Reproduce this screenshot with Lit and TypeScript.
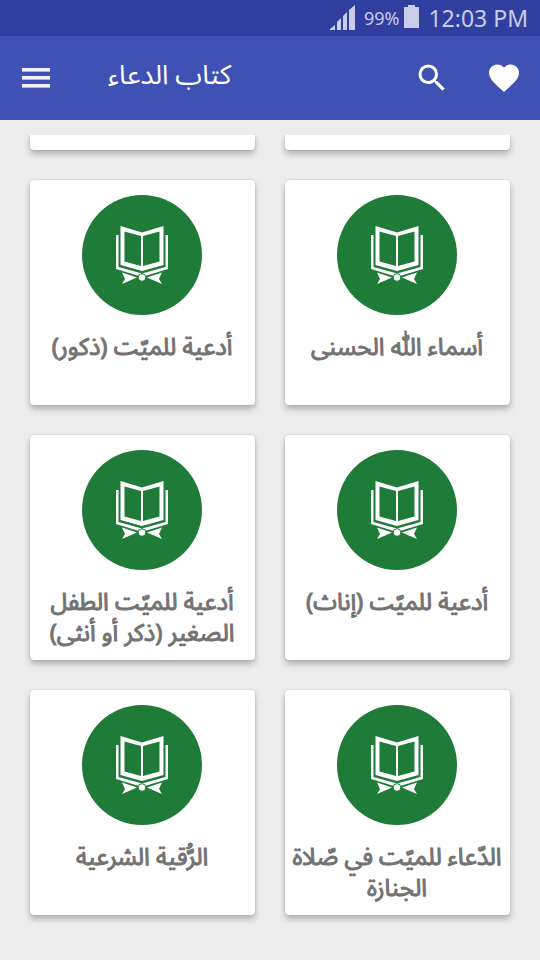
import { LitElement, html, css } from "lit";
import { customElement, property } from "lit/decorators.js";

@customElement("status-bar")
class StatusBar extends LitElement {
  static styles = css`
    :host {
      display: flex;
      align-items: center;
      justify-content: flex-end;
      height: 36px;
      padding: 0 12px;
      box-sizing: border-box;
      background: #303f9f;
      color: #c8cdea;
      font-family: "Noto Sans", sans-serif;
      white-space: nowrap;
    }
    svg {
      display: block;
      fill: currentColor;
    }
    .battery {
      margin-bottom: 4px;
    }
    .level {
      margin: 0 5px 0 8px;
      font-size: 18px;
      line-height: 24px;
    }
    .time {
      margin-left: 9px;
      font-size: 23px;
      line-height: 32px;
    }
  `;
  render() {
    return html`
      <svg width="26" height="26" viewBox="0 0 26 26" aria-hidden="true">
        <path d="M0 25v-1l5-4v5zM7 25v-8l4-4v12zM13 25V11l4-4v18zM19 25V5l6-5v25z" />
      </svg>
      <span class="level">99%</span>
      <svg class="battery" width="15" height="24" viewBox="0 0 15 24" aria-hidden="true">
        <path d="M0 3h4V1h7v2h4v21H0z" />
      </svg>
      <span class="time">12:03 PM</span>
    `;
  }
}

@customElement("app-bar")
class AppBar extends LitElement {
  static styles = css`
    :host {
      display: flex;
      align-items: center;
      height: 84px;
      padding: 0 12px;
      box-sizing: border-box;
      background: #3f51b5;
      color: #fff;
    }
    button {
      display: grid;
      place-items: center;
      width: 48px;
      height: 48px;
      padding: 0;
      border: 0;
      background: none;
      color: inherit;
    }
    svg {
      display: block;
      fill: currentColor;
    }
    h1 {
      flex: 1;
      margin: 0 0 4px 48px;
      font: 400 27px/36px "Noto Sans Arabic", "DejaVu Sans", sans-serif;
      text-align: left;
    }
    .actions {
      display: flex;
      gap: 24px;
    }
  `;
  render() {
    return html`
      <button aria-label="القائمة">
        <svg width="28" height="20" viewBox="0 0 28 20">
          <path d="M0 0h28v4H0zM0 8h28v4H0zM0 16h28v4H0z" opacity=".6" />
          <path d="M0 0h28v3H0zM0 8h28v3H0zM0 16h28v3H0z" opacity=".8" />
        </svg>
      </button>
      <h1 dir="rtl">كتاب الدعاء</h1>
      <div class="actions">
        <button aria-label="بحث">
          <svg width="36" height="36" viewBox="0 0 24 24">
            <path
              d="M15.5 14h-.79l-.28-.27A6.47 6.47 0 0 0 16 9.500 6.500 6.500 0 1 0 9.500 16c1.610 0 3.090-.59 4.230-1.570l.27.28v.79l5 4.990L20.490 19l-4.990-5zm-6 0a4.500 4.500 0 1 1 0-9 4.500 4.500 0 0 1 0 9z"
            />
          </svg>
        </button>
        <button aria-label="المفضلة">
          <svg width="36" height="36" viewBox="0 0 24 24">
            <path
              d="M12 21.350l-1.450-1.320C5.400 15.360 2 12.280 2 8.500 2 5.420 4.420 3 7.500 3c1.740 0 3.410.81 4.500 2.090C13.090 3.810 14.760 3 16.500 3 19.580 3 22 5.420 22 8.500c0 3.780-3.400 6.860-8.550 11.540z"
            />
          </svg>
        </button>
      </div>
    `;
  }
}

@customElement("dua-card")
class DuaCard extends LitElement {
  @property() label = "";

  static styles = css`
    :host {
      display: block;
      min-width: 0;
    }
    .card {
      display: flex;
      flex-direction: column;
      align-items: center;
      width: 100%;
      aspect-ratio: 1;
      padding: 15px 6px 0 5px;
      box-sizing: border-box;
      border: 0;
      border-radius: 4px;
      background: #fff;
      box-shadow: 0 4px 6px rgba(0, 0, 0, 0.26), 0 0 2px rgba(0, 0, 0, 0.16);
      color: #737373;
    }
    .disc {
      display: grid;
      place-items: center;
      flex: none;
      width: 120px;
      height: 120px;
      border-radius: 50%;
      background: #1e7b38;
    }
    .label {
      margin-top: 17px;
      font: 400 24px/31px "Noto Sans Arabic", "DejaVu Sans", sans-serif;
      -webkit-text-stroke: 1px currentColor;
      text-align: center;
    }
  `;
  render() {
    return html`
      <button class="card" dir="rtl">
        <span class="disc">
          <svg width="52" height="58" viewBox="0 0 52 58" fill="#fff" aria-hidden="true">
            <path
              fill-rule="evenodd"
              d="M4.500 0L26 6.500 47.500 0V39L26 45 4.500 39zM8.500 5.500V35.500L25 40V10zM43.500 5.500V35.500L27 40V10z"
            />
            <path d="M0 9h2.500v32L26 47.500 49.500 41V9H52V43L29 50 26 48.500 23 50 0 43z" />
            <path d="M6 46.500L21 51.500L6 58L9 53zM46 46.500L31 51.500L46 58L43 53z" />
            <circle cx="26" cy="51.500" r="3.800" stroke="#1e7b38" />
          </svg>
        </span>
        <span class="label">${this.label}</span>
      </button>
    `;
  }
}

@customElement("app-root")
class AppRoot extends LitElement {
  private duas = [
    "أسماء اللّٰه الحسنى",
    "أدعية للميّت (ذكور)",
    "أدعية للميّت (إناث)",
    "أدعية للميّت الطفل الصغير (ذكر أو أنثى)",
    "الدّعاء للميّت في صّلاة الجنازة",
    "الرُّقية الشرعية",
  ];

  static styles = css`
    :host {
      display: flex;
      flex-direction: column;
      min-height: 100vh;
      background: #ededed;
    }
    main {
      flex: 1;
      margin: 15px 0;
      padding: 0 30px;
      overflow: hidden;
    }
    .grid {
      display: grid;
      grid-template-columns: 1fr 1fr;
      gap: 30px;
      direction: rtl;
    }
    .tail {
      height: 15px;
      border-radius: 0 0 4px 4px;
      background: #fff;
      box-shadow: 0 4px 6px rgba(0, 0, 0, 0.26), 0 0 2px rgba(0, 0, 0, 0.16);
    }
  `;
  render() {
    return html`
      <status-bar></status-bar>
      <app-bar></app-bar>
      <main>
        <div class="grid">
          <div class="tail"></div>
          <div class="tail"></div>
          ${this.duas.map((d) => html`<dua-card .label=${d}></dua-card>`)}
        </div>
      </main>
    `;
  }
}
